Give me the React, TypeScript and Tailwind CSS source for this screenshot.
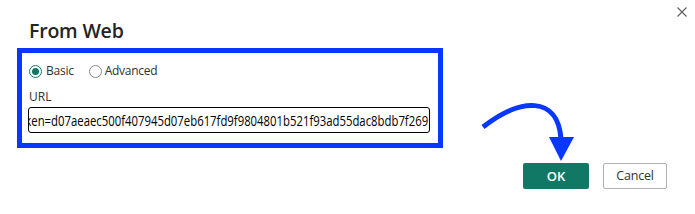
import React from "react";

export default function App() {
  const url =
    "https://api.example.com/v1/export/data?format=json&token=d07aeaec500f407945d07eb617fd9f9804801b521f93ad55dac8bdb7f269";
  return (
    <div className="relative w-[695px] h-[214px] bg-white overflow-hidden font-['Open_Sans',sans-serif] text-[#323130]">
      <button className="absolute left-[677px] top-[7px] w-[10px] h-[10px]" aria-label="Close">
        <svg width="10" height="10" viewBox="0 0 10 10" className="block">
          <path d="M0.5 0.5 L9.5 9.5 M9.5 0.5 L0.5 9.5" stroke="#605e5c" strokeWidth="1.1" fill="none" />
        </svg>
      </button>

      <div className="pt-[19px] pl-[29px]">
        <h1 className="text-[19.5px] leading-[24px] font-semibold tracking-[-0.2px] text-[#252423]">From Web</h1>
      </div>

      <div className="ml-[17px] mt-[5px] w-[426px] h-[100px] border-[5px] border-[#0838ff] pt-[9px] pl-[7px] pr-[8px]">
        <div className="flex items-center h-[18px] text-[12px] leading-[16px] tracking-[-0.25px]">
          <div className="flex items-center gap-[4px]">
            <span className="w-[13px] h-[13px] rounded-full border border-[#117865] flex items-center justify-center">
              <span className="w-[7px] h-[7px] rounded-full bg-[#117865]" />
            </span>
            <span>Basic</span>
          </div>
          <div className="flex items-center gap-[3px] ml-[15px]">
            <span className="w-[13px] h-[13px] rounded-full border border-[#8a8886]" />
            <span>Advanced</span>
          </div>
        </div>
        <div className="mt-[9px] text-[12px] leading-[16px]">URL</div>
        <div className="mt-[2px] ml-[-1px] w-[402px] h-[26px] border border-black rounded-[3px] flex justify-end overflow-hidden pr-[1px]">
          <span className="shrink-0 whitespace-nowrap text-[15px] leading-[24px] text-black scale-x-[0.756] origin-right">
            {url}
          </span>
        </div>
      </div>

      <div className="flex justify-end gap-[14px] pr-[28px] mt-[15px]">
        <button className="w-[66px] h-[26px] rounded-[2px] bg-[#117865] text-white text-[13px] font-semibold leading-[26px]">
          OK
        </button>
        <button className="w-[64px] h-[26px] rounded-[2px] bg-white border border-[#b3b0ad] text-[#323130] text-[12.5px] tracking-[-0.2px] leading-[24px]">
          Cancel
        </button>
      </div>

      <svg className="absolute left-0 top-0 pointer-events-none" width="695" height="214" viewBox="0 0 695 214">
        <path d="M483 127 C520 98 558 95 561 139" stroke="#0838ff" strokeWidth="5" fill="none" strokeLinecap="butt" />
        <polygon points="549,137 574,137 561,161" fill="#0838ff" />
      </svg>
    </div>
  );
}
